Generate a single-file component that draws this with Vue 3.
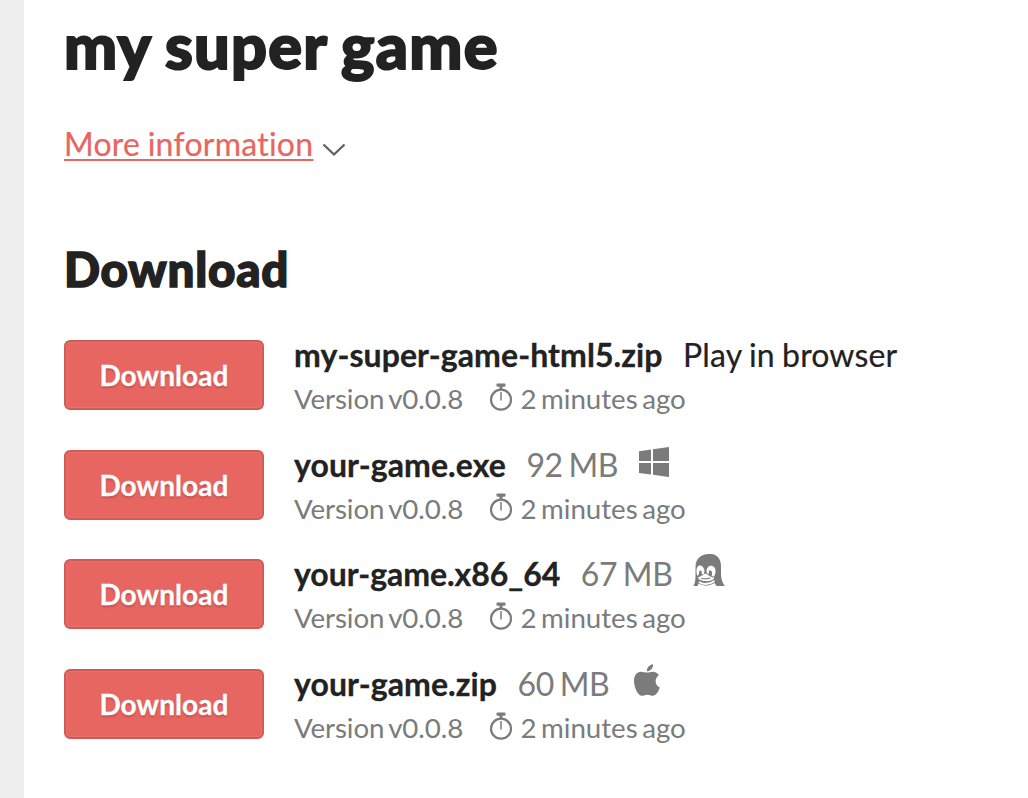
<script setup>
const uploads = [
  { name: 'my-super-game-html5.zip', note: 'Play in browser' },
  { name: 'your-game.exe', size: '92 MB', platform: 'windows' },
  { name: 'your-game.x86_64', size: '67 MB', platform: 'linux' },
  { name: 'your-game.zip', size: '60 MB', platform: 'apple' },
]
</script>

<template>
  <main class="page">
    <h1>my super game</h1>
    <div class="more">
      <a class="more-link">More information</a>
      <svg class="chevron" width="24" height="14" viewBox="0 0 24 14">
        <path d="M1.5 1.5 12 11.5 22.5 1.5" fill="none" stroke="#606060" stroke-width="2.3" />
      </svg>
    </div>
    <h2>Download</h2>
    <div class="uploads">
      <div v-for="u in uploads" :key="u.name" class="upload">
        <button class="btn">Download</button>
        <div class="info">
          <div class="line">
            <strong class="name" :class="u.platform">{{ u.name }}</strong>
            <span v-if="u.note" class="note">{{ u.note }}</span>
            <span v-if="u.size" class="size">{{ u.size }}</span>
            <svg v-if="u.platform === 'windows'" class="icon windows" width="32" height="32" viewBox="0 0 32 32">
              <path fill="#7b7b7b" d="M1 5.2 13 3.5V15H1zM15 3.2 31 1V15H15zM1 17H13V28.6L1 27zM15 17H31V31L15 28.8z" />
            </svg>
            <svg v-if="u.platform === 'linux'" class="icon linux" width="32" height="34" viewBox="0 0 32 34">
              <path fill="#7b7b7b" d="M.5 33C2 30 2.500 27 2.500 23V14C2.500 6 8 1 15.500 1H18C24 1 28 6 28 13V21C28 26 29.500 30 31.800 33H23.500L21.500 30Q13 35 5.500 30.500L4.500 33z" />
              <path fill="#fff" d="M3.500 18C3.500 10 10.500 11.500 11.500 17.500L11 21H8.500C10 17 5.500 15.500 6 21L4.500 23C3.800 22 3.500 20 3.500 18z" />
              <path fill="#fff" d="M13.500 18.500C13.500 10.500 23.300 11 22.500 19 22.300 21.500 21.500 23 20.500 23.800L18.500 22.500C21 18.500 15 13.500 15.800 21.200L14 20.500z" />
              <path fill="#fff" d="M5 24.500Q8 23.500 11 21Q13 20 15 22Q18 24 21 24.500L20.500 26.500Q13.500 30 6 26.500z" />
              <path fill="#7b7b7b" d="M8 24.700Q12.500 25.900 17.500 24.500V25.400Q12.500 27 8 25.700z" />
              <path fill="none" stroke="#fff" stroke-width="1.900" d="M6 29Q13.500 33.500 21.500 28" />
            </svg>
            <svg v-if="u.platform === 'apple'" class="icon apple" width="28" height="34" viewBox="0 0 28 34">
              <path fill="#7b7b7b" d="M14 8.600C12 8.600 10 7.800 8 7.800 3.500 7.800 1 12 1 17 1 23 4.700 31.800 9 31.800 11 31.800 12.200 30.700 14.500 30.700S17.800 31.800 19.800 31.800C22.800 31.800 25.500 27.500 26.800 23.500 21.500 21 21.300 14 25.900 11.200 24.500 9 22.300 7.800 20 7.800 17.400 7.800 16 8.600 14 8.600zM13.900 7.300C13.600 3.500 16.700.6 20 .2 20.400 4 17.300 7.200 13.900 7.300z" />
            </svg>
          </div>
          <div class="meta">
            <span class="version">Version v0.0.8</span>
            <svg class="clock" width="24" height="28" viewBox="0 0 24 28">
              <g fill="none" stroke="#7b7b7b">
                <circle cx="12" cy="16.700" r="10" stroke-width="2.200" />
                <path d="M12 3V7" stroke-width="3" />
                <path d="M12 9V17.500" stroke-width="1.500" />
              </g>
              <rect x="7.500" y="0.500" width="9" height="3.300" rx="1" fill="#7b7b7b" />
            </svg>
            <span class="age">2 minutes ago</span>
          </div>
        </div>
      </div>
    </div>
  </main>
</template>

<style>
body {
  margin: 0;
  background: #fff;
  overflow: hidden;
}
</style>

<style scoped>
.page {
  box-sizing: border-box;
  height: 798px;
  border-left: 24px solid #eee;
  padding: 7px 0 0 40px;
  overflow: hidden;
  background: #fff;
  color: #222;
  font-family: Lato, sans-serif;
  font-variant-ligatures: none;
}
h1 {
  margin: 0;
  font-size: 63px;
  line-height: 76px;
  font-weight: 900;
  letter-spacing: 1.250px;
  word-spacing: -2px;
  -webkit-text-stroke: 2px #222;
  white-space: nowrap;
}
.more {
  display: flex;
  align-items: center;
  height: 40px;
  margin-top: 41px;
  font-size: 32px;
  line-height: 40px;
}
.more-link {
  color: #e86661;
  letter-spacing: 0.25px;
  word-spacing: -1px;
  text-decoration: underline;
  text-decoration-thickness: 2px;
  text-underline-offset: 3px;
  -webkit-text-stroke: 0.2px #e86661;
}
.chevron {
  margin: 12px 0 0 9px;
}
h2 {
  margin: 76px 0 0;
  font-size: 47.500px;
  line-height: 58px;
  font-weight: 900;
  letter-spacing: 0.75px;
  -webkit-text-stroke: 1.500px #222;
}
.uploads {
  display: flex;
  flex-direction: column;
  gap: 29.670px;
  margin-top: 36px;
}
.upload {
  display: flex;
  height: 80px;
}
.btn {
  box-sizing: border-box;
  flex: none;
  width: 200px;
  height: 70px;
  margin: 6px 30px 0 0;
  padding: 0;
  border: 2px solid #cf5b57;
  border-radius: 6px;
  background: #e86661;
  box-shadow: inset 0 0 0 1px #ea706b;
  color: #fff;
  font: 700 28px/34px Lato, sans-serif;
  letter-spacing: 0.1px;
  text-shadow: 0 2px 2px #c4504c;
  -webkit-text-stroke: 0.3px #fff;
}
.line {
  display: flex;
  height: 44px;
  font-size: 32px;
  line-height: 42px;
  white-space: nowrap;
}
.name {
  font-weight: 700;
  letter-spacing: 0.08px;
  -webkit-text-stroke: 0.3px #222;
}
.name.linux {
  letter-spacing: -0.04px;
}
.note,
.size {
  margin-left: 20.500px;
}
.note {
  letter-spacing: 0.15px;
  word-spacing: -1px;
  -webkit-text-stroke: 0.2px #222;
}
.size {
  letter-spacing: -0.4px;
  word-spacing: -2px;
}
.size,
.meta {
  color: #7b7b7b;
}
.icon {
  flex: none;
}
.icon.windows {
  margin: 2px 0 0 20px;
}
.icon.linux {
  margin: 0 0 0 21px;
}
.icon.apple {
  margin: 1px 0 0 24px;
}
.meta {
  display: flex;
  height: 36px;
  font-size: 27.700px;
  line-height: 41px;
  letter-spacing: -0.1px;
  word-spacing: -2.500px;
  white-space: nowrap;
}
.version {
  width: 168.500px;
}
.age {
  letter-spacing: -0.03px;
}
.clock {
  flex: none;
  margin: 5px 8px 0 26px;
}
</style>
